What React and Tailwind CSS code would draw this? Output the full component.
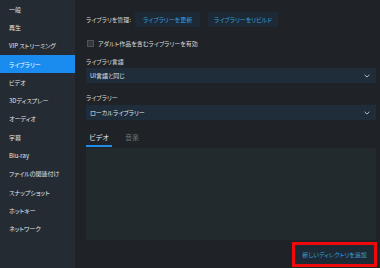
import React from "react";

const items = [
  "一般",
  "再生",
  "VIP ストリーミング",
  "ライブラリー",
  "ビデオ",
  "3Dディスプレー",
  "オーディオ",
  "字幕",
  "Blu-ray",
  "ファイルの関連付け",
  "スナップショット",
  "ホットキー",
  "ネットワーク",
];

function Chevron() {
  return (
    <svg width="6" height="4" viewBox="0 0 6 4" fill="none">
      <path d="M0.6 0.8 L3 3.1 L5.4 0.8" stroke="#c9ced3" strokeWidth="0.9" />
    </svg>
  );
}

export default function App() {
  return (
    <div className="flex w-[380px] h-[268px] overflow-hidden bg-[#1f2226] font-['Noto_Sans_CJK_JP','Noto_Sans',sans-serif] text-[6px] [font-feature-settings:'palt']">
      <aside className="w-[75px] shrink-0 bg-[#252b32] flex flex-col">
        {items.map((t, i) => (
          <div
            key={t}
            className={
              i === 3
                ? "h-[18.3px] flex items-center pl-[9px] bg-[#1a8cf0] text-white"
                : "h-[18.3px] flex items-center pl-[9px] text-[#e2e5e9]"
            }
          >
            {t}
          </div>
        ))}
      </aside>
      <main className="flex-1 flex flex-col pl-[11px] pr-[4px] text-[#d8dbdf]">
        <div className="mt-[12px] h-[15px] flex items-center">
          <div className="w-[49px]">ライブラリを管理:</div>
          <button className="w-[65px] h-[15px] bg-[#1d2a35] text-[#3a9fd8] flex items-center justify-center">
            ライブラリーを更新
          </button>
          <button className="ml-[8px] w-[70px] h-[15px] bg-[#1d2a35] text-[#3a9fd8] flex items-center justify-center">
            ライブラリーをリビルド
          </button>
        </div>
        <div className="mt-[13px] h-[7px] flex items-center">
          <div className="ml-[1px] w-[7px] h-[7px] border border-[#4d535a] bg-[#33383e]" />
          <div className="ml-[4px] leading-[8px]">アダルト作品を含むライブラリーを有効</div>
        </div>
        <div className="mt-[11px] h-[8px] leading-[8px]">ライブラリ言語</div>
        <div className="mt-[2px] h-[15px] bg-[#1f2c3a] flex items-center justify-between pl-[4px] pr-[6px]">
          <span className="text-[#e2e5e9]">UI言語と同じ</span>
          <Chevron />
        </div>
        <div className="mt-[11px] h-[8px] leading-[8px]">ライブラリー</div>
        <div className="mt-[3px] h-[15px] bg-[#1f2c3a] flex items-center justify-between pl-[4px] pr-[6px]">
          <span className="text-[#e2e5e9]">ローカルライブラリー</span>
          <Chevron />
        </div>
        <div className="mt-[11px] flex gap-[7px] text-[7px]">
          <div className="w-[26px] pt-[2px] pb-[4px] border-b-2 border-[#1f8ee8] text-center leading-[8px] text-[#eceef1]">
            ビデオ
          </div>
          <div className="w-[26px] pt-[2px] pb-[4px] border-b-2 border-transparent text-center leading-[8px] text-[#6b7177]">
            音楽
          </div>
        </div>
        <div className="mt-[1px] h-[92px] bg-[#222a2e]" />
        <div className="mt-[2px] flex justify-end mr-[-1px]">
          <div className="w-[85px] h-[25px] border-[3px] border-[#ee0a0a] flex">
            <button className="flex-1 bg-[#1d2a35] text-[#3a9fd8] flex items-center justify-center">
              新しいディレクトリを追加
            </button>
          </div>
        </div>
      </main>
    </div>
  );
}
